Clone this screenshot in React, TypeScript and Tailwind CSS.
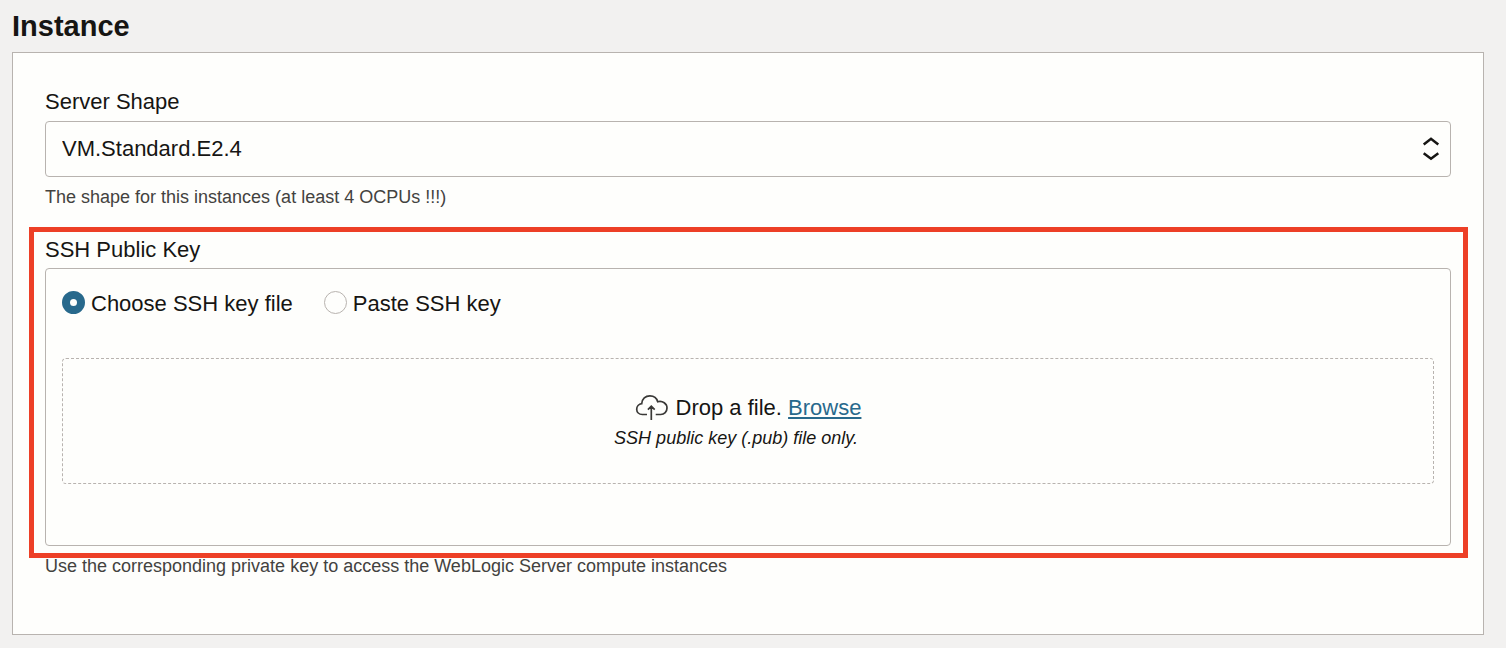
import { useState } from 'react';

function ShapeSelect() {
  return (
    <div className="flex flex-col">
      <label htmlFor="shape" className="mb-[3px] text-[22px] leading-8">
        Server Shape
      </label>
      <div className="relative">
        <select
          id="shape"
          aria-describedby="shape-hint"
          defaultValue="VM.Standard.E2.4"
          className="block h-14 w-full appearance-none rounded border border-[#b8b3af] bg-[#fefefc] px-4 pb-[2px] text-[22px] text-[#161513]"
        >
          <option>VM.Standard.E2.4</option>
        </select>
        <svg
          aria-hidden="true"
          viewBox="0 0 18 24"
          className="pointer-events-none absolute top-4 right-[11px] h-6 w-[18px]"
          fill="none"
          stroke="#161513"
          strokeWidth="2.5"
        >
          <path d="M1.700 7.500 9 1.800l7.300 5.700M1.700 16.300 9 21.800l7.300-5.500" />
        </svg>
      </div>
      <p id="shape-hint" className="mt-2 text-[18px] leading-6 text-[#43423f]">
        The shape for this instances (at least 4 OCPUs !!!)
      </p>
    </div>
  );
}

const radioClass =
  'mt-[5px] size-[23px] shrink-0 appearance-none rounded-full border border-[#b8b3af] bg-[#fefefc] checked:border-8 checked:border-[#28698c]';

function KeySource() {
  const [source, setSource] = useState('file');
  return (
    <div className="flex gap-[31px] text-[22px] leading-9">
      <label className="flex items-start gap-[6px]">
        <input
          type="radio"
          name="source"
          className={radioClass}
          checked={source === 'file'}
          onChange={() => setSource('file')}
        />
        Choose SSH key file
      </label>
      <label className="flex items-start gap-[6px]">
        <input
          type="radio"
          name="source"
          className={radioClass}
          checked={source === 'paste'}
          onChange={() => setSource('paste')}
        />
        Paste SSH key
      </label>
    </div>
  );
}

function DropZone() {
  return (
    <div className="mt-9 flex flex-col items-center rounded border border-dashed border-[#b8b3af] pt-[33px] pb-[33px]">
      <div className="flex items-start text-[22px] leading-8">
        <svg
          aria-hidden="true"
          viewBox="0 -2 33 28"
          className="mr-2 h-7 w-[33px]"
          fill="none"
          stroke="#3a3937"
          strokeWidth="1.7"
        >
          <path d="M12 20.500H7.300C4 20.500 1.700 18.100 1.700 15.200c0-2.900 2.100-5.200 5-5.500C7 5 10.500 1.800 14.900 1.800c3.800 0 6.900 2.400 7.800 5.900 5-1.300 9.300 2 9.300 6.400 0 3.700-2.700 6.400-6.300 6.400h-5M16.300 26V12.500M12.900 15.600l3.400-3.400 3.400 3.400" />
        </svg>
        <span>
          Drop a file.{' '}
          <a
            href="#browse"
            className="text-[#28698c] underline decoration-2 underline-offset-2 [text-decoration-skip-ink:none]"
          >
            Browse
          </a>
        </span>
      </div>
      <p className="mt-[2px] pr-6 text-[18px] leading-6 italic">SSH public key (.pub) file only.</p>
    </div>
  );
}

export default function App() {
  return (
    <main className="min-h-screen bg-[#f2f1f0] pt-2 pr-[22px] pb-3 pl-3 font-['Liberation_Sans',Arial,sans-serif] text-[#161513]">
      <h1 className="mb-2 text-[29px] leading-9 font-bold">Instance</h1>
      <section className="border border-[#b8b3af] bg-[#fefefc] px-8 pt-[33px] pb-[60px]">
        <ShapeSelect />
        <div className="mt-[18px] -mr-[17px] -ml-4 border-5 border-[#ed3f26] pr-3 pb-[7px] pl-[11px]">
          <h2 id="key-title" className="text-[22px] leading-9">
            SSH Public Key
          </h2>
          <div
            role="group"
            aria-labelledby="key-title"
            className="rounded border border-[#b8b3af] px-4 pt-[17px] pb-[61px]"
          >
            <KeySource />
            <DropZone />
          </div>
        </div>
        <p className="text-[18px] leading-4 text-[#43423f]">
          Use the corresponding private key to access the WebLogic Server compute instances
        </p>
      </section>
    </main>
  );
}
